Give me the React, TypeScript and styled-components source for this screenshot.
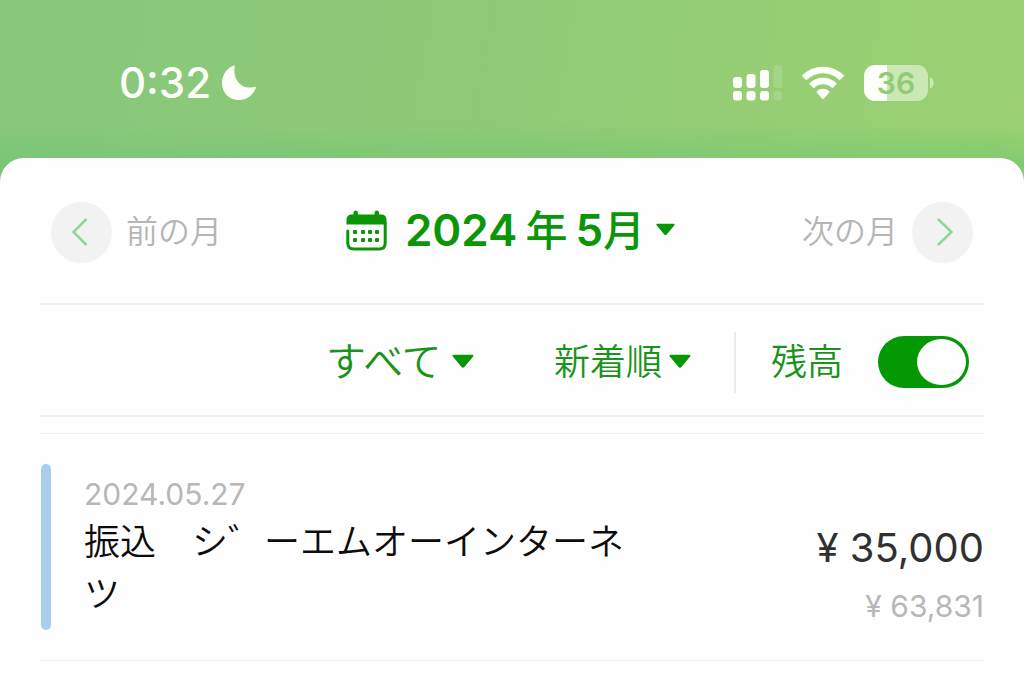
import React, { useState } from "react";
import styled, { createGlobalStyle } from "styled-components";

const sans = `Inter, "Noto Sans CJK JP", sans-serif`;
const green = "#0b9608";

const GlobalStyle = createGlobalStyle`
  *, *::before, *::after { box-sizing: border-box; }
  body { margin: 0; background: #fefefe; font-family: ${sans}; }
  button, select, input { font: inherit; color: inherit; margin: 0; }
`;

const Screen = styled.div`
  min-height: 100vh;
  display: flex;
  flex-direction: column;
  background:
    linear-gradient(180deg, rgba(110, 198, 112, 0) 124px, rgba(110, 198, 112, 0.6) 164px),
    linear-gradient(100deg, #87c77c 0%, #90cb76 50%, #9fd271 100%);
`;

const StatusBar = styled.header`
  display: flex;
  align-items: center;
  justify-content: space-between;
  height: 158px;
  padding: 8px 90px 0 119px;
  color: #fefffa;
`;

const StatusGroup = styled.div<{ $gap: number }>`
  display: flex;
  align-items: center;
  gap: ${(p) => p.$gap}px;
`;

const Clock = styled.time`
  font-size: 42px;
  line-height: 52px;
  font-weight: 500;
`;

const Battery = styled.div`
  display: flex;
  align-items: center;
  gap: 2px;
`;

const BatteryBody = styled.div`
  width: 64px;
  height: 36px;
  border-radius: 11px;
  background: linear-gradient(90deg, #fdfffa 36%, #c9e8b3 36%);
  color: #93ca75;
  font-size: 30px;
  line-height: 36px;
  font-weight: 600;
  text-align: center;
`;

const Sheet = styled.main`
  flex: 1;
  padding: 0 40px;
  border-radius: 24px 24px 0 0;
  background: #fefefe;
`;

const MonthBar = styled.nav`
  display: flex;
  align-items: center;
  justify-content: space-between;
  height: 147px;
  padding: 3px 11px 0;
  border-bottom: 2px solid #f0f0f0;
`;

const PlainButton = styled.button`
  display: flex;
  align-items: center;
  padding: 0;
  border: 0;
  background: none;
  cursor: pointer;
`;

const StepButton = styled(PlainButton)`
  gap: 14px;
  color: #b5b5b5;
  font-size: 32px;
  line-height: 40px;
  font-weight: 350;
`;

const Round = styled.span`
  display: flex;
  align-items: center;
  justify-content: center;
  width: 61px;
  height: 61px;
  border-radius: 50%;
  background: #f2f2f2;
`;

const MonthButton = styled(PlainButton)`
  padding: 0 4px 4px 0;
  color: ${green};
  font-size: 44px;
  line-height: 52px;
  font-weight: 600;
`;

const MonthText = styled.span`
  display: flex;
  align-items: baseline;
  gap: 8px;
  margin: 0 10px 0 17px;
`;

const Kanji = styled.span`
  font-size: 42px;
  font-weight: 500;
`;

const FilterBar = styled.form`
  display: flex;
  align-items: center;
  justify-content: flex-end;
  height: 112px;
  padding: 4px 15px 0 0;
  border-bottom: 2px solid #f0f0f0;
  color: #1a931a;
  font-size: 36px;
  line-height: 52px;
  font-weight: 350;
`;

const Picker = styled.label`
  display: flex;
  align-items: center;
  gap: 5px;
  margin-left: 79px;
`;

const Select = styled.select<{ $size: number }>`
  appearance: none;
  padding: 0;
  border: 0;
  background: none;
  font-size: ${(p) => p.$size}px;
  cursor: pointer;
`;

const Separator = styled.span`
  width: 2px;
  height: 61px;
  margin: 0 35px 0 42px;
  background: #ececec;
`;

const SwitchLabel = styled.label`
  display: flex;
  align-items: center;
  gap: 35px;
`;

const Switch = styled.input`
  appearance: none;
  display: flex;
  align-items: center;
  width: 91px;
  height: 52px;
  padding: 0 3px;
  border-radius: 26px;
  background: ${(p) => (p.checked ? "#049804" : "#cccccc")};
  cursor: pointer;

  &::before {
    content: "";
    width: 49px;
    height: 46px;
    margin-left: ${(p) => (p.checked ? "auto" : "0")};
    border-radius: 50%;
    background: #fefefe;
  }
`;

const List = styled.ul`
  margin: 16px 0 0;
  padding: 0;
  list-style: none;
  border-top: 1px solid #f0f0f0;
`;

const Entry = styled.li`
  display: flex;
  padding: 30px 0;
  border-bottom: 1px solid #f0f0f0;
`;

const Marker = styled.span`
  flex: none;
  width: 10px;
  margin: 0 33px 0 1px;
  border-radius: 5px;
  background: #a9cdec;
`;

const Details = styled.div`
  flex: 1;
  padding: 8px 0 10px;
`;

const EntryDate = styled.time`
  display: block;
  color: #b7b7b7;
  font-size: 30px;
  line-height: 44px;
  font-weight: 400;
`;

const Description = styled.p`
  margin: 0;
  color: #0c0c0c;
  font-size: 36px;
  line-height: 52px;
  font-weight: 350;
  word-break: break-all;
`;

const Amounts = styled.div`
  display: flex;
  flex-direction: column;
  justify-content: flex-end;
  gap: 10px;
  width: 340px;
  padding-bottom: 6px;
  font-weight: 400;
  text-align: right;
`;

const Amount = styled.span`
  color: #303030;
  font-size: 40px;
  line-height: 60px;
`;

const Balance = styled.span`
  color: #b7b7b7;
  font-size: 30px;
  line-height: 36px;
`;

const Caret = ({ width = 24 }: { width?: number }) => (
  <svg width={width} height="16" viewBox="0 0 24 16" aria-hidden="true">
    <path d="M2.600.8h18.800c1 0 1.400 1 .8 1.700l-8.800 10.600c-.8.9-2 .9-2.800 0L1.800 2.500C1.200 1.800 1.600.8 2.600.8z" fill="#079706" />
  </svg>
);

const Chevron = ({ left = false }: { left?: boolean }) => (
  <svg width="20" height="30" viewBox="0 0 20 30" fill="none" aria-hidden="true">
    <path d={left ? "M14.5 2 1.5 15l13 13" : "M5 2 18.500 15 5 28"} stroke="#93d597" strokeWidth="2.6" />
  </svg>
);

const Moon = () => (
  <svg width="36" height="36" viewBox="0 0 36 36" aria-hidden="true">
    <path d="M12.2.7c.9-.4 1.7.3 1.500 1.300C11.500 14 20 25.500 33.300 21.900c1-.3 1.800.4 1.400 1.400C32 30.500 25.800 35 18 35 8.300 35 1 27.700 1 18.200 1 10.200 5.400 3.500 12.200.7z" fill="#fefffa" />
  </svg>
);

const Signal = () => (
  <svg width="50" height="36" viewBox="0 0 50 36" fill="#fefffa" aria-hidden="true">
    <rect x="1" y="12" width="9" height="11" rx="3" />
    <rect x="14.500" y="9" width="9" height="14" rx="3" />
    <rect x="28" y="5" width="9" height="18" rx="3" />
    <rect x="41.500" y="0" width="8.5" height="23" rx="3" opacity=".15" />
    <rect x="1" y="26" width="9" height="9.500" rx="3" />
    <rect x="14.500" y="26" width="9" height="9.500" rx="3" />
    <rect x="28" y="26" width="9" height="9.500" rx="3" />
    <rect x="41.500" y="26" width="8.5" height="9.500" rx="3" opacity=".15" />
  </svg>
);

const Wifi = () => (
  <svg width="44" height="34" viewBox="0 0 44 34" aria-hidden="true">
    <g fill="none" stroke="#fefffa" strokeWidth="6.500">
      <path d="M3 12C13.800 1.200 30.200 1.200 41 12" />
      <path d="M10.400 20C17 13.300 27 13.300 33.600 20" />
    </g>
    <path d="M16 25c3.400-3 8.600-3 12 0 .6.5.6 1.200 0 1.700l-5 5.800c-.6.6-1.400.6-2 0l-5-5.800c-.6-.5-.6-1.200 0-1.700z" fill="#fefffa" />
  </svg>
);

const Calendar = () => (
  <svg width="44" height="44" viewBox="0 0 44 44" fill={green} aria-hidden="true">
    <path d="M2.500 16.500V12c0-3.500 2-5.500 5.500-5.500h1.500V4.800a2.200 2.200 0 0 1 4.400 0v1.700h16.700V4.800a2.200 2.200 0 0 1 4.400 0v1.700H37c3.500 0 5.500 2 5.500 5.500v4.500z" />
    <path d="M3.800 23v12c0 4 2 6 6 6h25.400c4 0 6-2 6-6V15" fill="none" stroke={green} strokeWidth="3" strokeLinecap="round" />
    {[22, 30].map((y) =>
      [9, 17, 24, 31].map((x) => <rect key={`${x}-${y}`} x={x} y={y} width="4" height="4" rx="1" />)
    )}
  </svg>
);

const entries = [
  {
    date: "2024.05.27",
    description: "振込　シ゛ーエムオーインターネツ",
    amount: "¥ 35,000",
    balance: "¥ 63,831",
  },
];

export default function App() {
  const [showBalance, setShowBalance] = useState(true);

  return (
    <Screen>
      <GlobalStyle />
      <StatusBar>
        <StatusGroup $gap={10}>
          <Clock>0:32</Clock>
          <Moon />
        </StatusGroup>
        <StatusGroup $gap={19}>
          <Signal />
          <Wifi />
          <Battery>
            <BatteryBody>36</BatteryBody>
            <svg width="4" height="12" viewBox="0 0 4 12" aria-hidden="true">
              <path d="M0 0c5 2.500 5 9.500 0 12z" fill="#c9e8b3" />
            </svg>
          </Battery>
        </StatusGroup>
      </StatusBar>
      <Sheet>
        <MonthBar>
          <StepButton type="button">
            <Round><Chevron left /></Round>
            前の月
          </StepButton>
          <MonthButton type="button" aria-haspopup="listbox">
            <Calendar />
            <MonthText>
              <span>2024</span>
              <Kanji>年</Kanji>
              <span>5<Kanji>月</Kanji></span>
            </MonthText>
            <Caret width={21} />
          </MonthButton>
          <StepButton type="button">
            次の月
            <Round><Chevron /></Round>
          </StepButton>
        </MonthBar>
        <FilterBar>
          <Picker>
            <Select $size={40} aria-label="種別" defaultValue="すべて">
              <option>すべて</option>
              <option>入金</option>
              <option>出金</option>
            </Select>
            <Caret />
          </Picker>
          <Picker>
            <Select $size={36} aria-label="並び順" defaultValue="新着順">
              <option>新着順</option>
              <option>古い順</option>
            </Select>
            <Caret />
          </Picker>
          <Separator />
          <SwitchLabel>
            残高
            <Switch
              type="checkbox"
              role="switch"
              checked={showBalance}
              onChange={(e) => setShowBalance(e.target.checked)}
            />
          </SwitchLabel>
        </FilterBar>
        <List>
          {entries.map((entry) => (
            <Entry key={entry.date}>
              <Marker />
              <Details>
                <EntryDate>{entry.date}</EntryDate>
                <Description>{entry.description}</Description>
              </Details>
              <Amounts>
                <Amount>{entry.amount}</Amount>
                {showBalance && <Balance>{entry.balance}</Balance>}
              </Amounts>
            </Entry>
          ))}
        </List>
      </Sheet>
    </Screen>
  );
}
